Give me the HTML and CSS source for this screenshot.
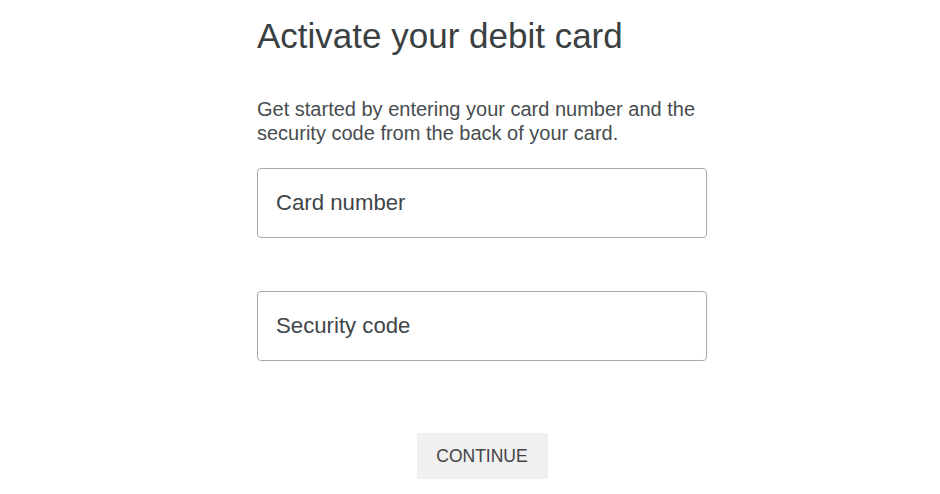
FILE: index.html
```html
<!DOCTYPE html>
<html lang="en">

<head>
  <meta charset="UTF-8">
  <meta name="viewport" content="width=device-width, initial-scale=1.0">
  <title>Activate your debit card</title>
  <link rel="stylesheet" href="styles.css">
</head>

<body>
  <div class="activate-container">
    <h1>Activate your debit card</h1>
    <p class="intro">Get started by entering your card number and the security code from the back of your card.</p>
    <form class="card-form">
      <input type="text" class="field" placeholder="Card number">
      <input type="text" class="field" placeholder="Security code">
      <div class="btn">
        <button type="button">CONTINUE</button>
      </div>
    </form>
  </div>
</body>

</html>
```

FILE: styles.css
```css
body {
  margin: 0;
  background-color: #fff;
  font-family: "Liberation Sans", Arial, sans-serif;
  color: #333;
}

.activate-container {
  width: 450px;
  margin-left: 257px;
  padding-top: 14px;
}

h1 {
  font-size: 35px;
  font-weight: normal;
  margin: 0;
  line-height: 44px;
  color: #3a3f42;
}

.intro {
  font-size: 20px;
  line-height: 24px;
  margin: 39px 0 0 0;
  color: #474c4f;
}

.card-form {
  display: flex;
  flex-direction: column;
  gap: 53px;
  margin-top: 23px;
}

.field {
  box-sizing: border-box;
  height: 70px;
  width: 100%;
  border: 1px solid #a9a9a9;
  border-radius: 4px;
  padding: 0 18px;
  font-family: inherit;
  font-size: 22.2px;
  color: #333;
}

.field::placeholder {
  color: #414649;
}

.btn {
  display: flex;
  justify-content: center;
  margin-top: 19px;
}

button {
  width: 131px;
  height: 46px;
  border: 0;
  background: #f0f0f0;
  color: #444;
  font-family: inherit;
  font-size: 17.5px;
}
```
